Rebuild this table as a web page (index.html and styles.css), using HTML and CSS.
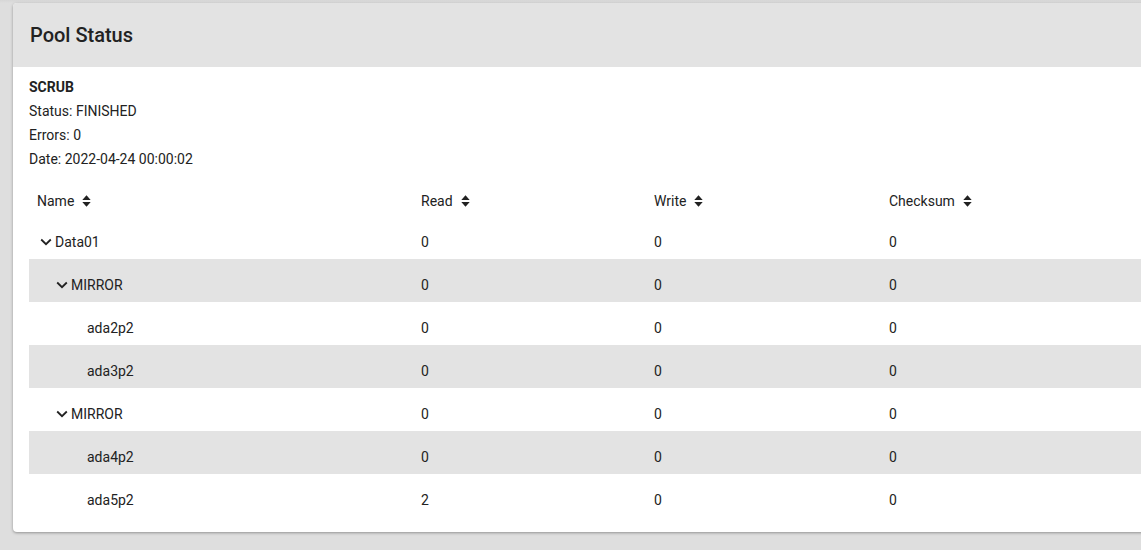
FILE: index.html
```html
<!DOCTYPE html>
<html>
<head>
<meta charset="utf-8">
<link rel="stylesheet" href="styles.css">
</head>
<body>
<div class="page">
  <div class="card">
    <div class="card-header"><h1 class="title">Pool Status</h1></div>
    <div class="card-body">
      <div class="info">
        <div class="info-line bold">SCRUB</div>
        <div class="info-line">Status: FINISHED</div>
        <div class="info-line">Errors: 0</div>
        <div class="info-line">Date: 2022-04-24 00:00:02</div>
      </div>
      <div class="table">
        <div class="row head">
          <div class="cell">Name<svg class="sort" viewBox="0 0 9 12"><path d="M4.5 0.3L8.7 4.9H0.3z M4.5 11.7L0.3 7.1H8.7z"/></svg></div>
          <div class="cell">Read<svg class="sort" viewBox="0 0 9 12"><path d="M4.5 0.3L8.7 4.9H0.3z M4.5 11.7L0.3 7.1H8.7z"/></svg></div>
          <div class="cell">Write<svg class="sort" viewBox="0 0 9 12"><path d="M4.5 0.3L8.7 4.9H0.3z M4.5 11.7L0.3 7.1H8.7z"/></svg></div>
          <div class="cell">Checksum<svg class="sort" viewBox="0 0 9 12"><path d="M4.5 0.3L8.7 4.9H0.3z M4.5 11.7L0.3 7.1H8.7z"/></svg></div>
        </div>
        <div class="row">
          <div class="cell name lvl0"><svg class="chev" viewBox="0 0 12 8"><path d="M1.2 1.5L6 6.2L10.8 1.5"/></svg>Data01</div>
          <div class="cell">0</div><div class="cell">0</div><div class="cell">0</div>
        </div>
        <div class="row alt">
          <div class="cell name lvl1"><svg class="chev" viewBox="0 0 12 8"><path d="M1.2 1.5L6 6.2L10.8 1.5"/></svg>MIRROR</div>
          <div class="cell">0</div><div class="cell">0</div><div class="cell">0</div>
        </div>
        <div class="row">
          <div class="cell name lvl2"><span class="spacer"></span>ada2p2</div>
          <div class="cell">0</div><div class="cell">0</div><div class="cell">0</div>
        </div>
        <div class="row alt">
          <div class="cell name lvl2"><span class="spacer"></span>ada3p2</div>
          <div class="cell">0</div><div class="cell">0</div><div class="cell">0</div>
        </div>
        <div class="row">
          <div class="cell name lvl1"><svg class="chev" viewBox="0 0 12 8"><path d="M1.2 1.5L6 6.2L10.8 1.5"/></svg>MIRROR</div>
          <div class="cell">0</div><div class="cell">0</div><div class="cell">0</div>
        </div>
        <div class="row alt">
          <div class="cell name lvl2"><span class="spacer"></span>ada4p2</div>
          <div class="cell">0</div><div class="cell">0</div><div class="cell">0</div>
        </div>
        <div class="row">
          <div class="cell name lvl2"><span class="spacer"></span>ada5p2</div>
          <div class="cell">2</div><div class="cell">0</div><div class="cell">0</div>
        </div>
      </div>
    </div>
  </div>
</div>
</body>
</html>
```

FILE: styles.css
```css
html, body {
  margin: 0;
  padding: 0;
  background: #dedede;
  overflow: hidden;
}
body {
  font-family: Roboto, "Liberation Sans", sans-serif;
  color: #222;
  font-size: 14px;
}
.page {
  padding: 3px 0 0 13px;
  height: 547px;
  background: linear-gradient(#d6d6d6 0, #dedede 3px);
}
.card {
  width: 1160px;
  background: #fff;
  border-radius: 4px;
  overflow: hidden;
  box-shadow: 0 1px 3px rgba(0,0,0,0.35);
}
.card-header {
  background: #e3e3e3;
  height: 64px;
  display: flex;
  align-items: center;
  padding-left: 17px;
}
.title {
  margin: 0;
  font-size: 20px;
  font-weight: 500;
  color: #222;
}
.card-body {
  padding: 8px 0 15px 16px;
}
.info-line {
  line-height: 24px;
}
.bold { font-weight: 700; }
.table {
  display: flex;
  flex-direction: column;
}
.row {
  display: grid;
  grid-template-columns: 384px 233px 235px 1fr;
  height: 43px;
  box-sizing: border-box;
  padding-top: 8px;
  align-items: center;
}
.row.head {
  height: 45px;
  padding-top: 15px;
}
.row.alt { background: #e3e3e3; }
.cell {
  padding-left: 8px;
  display: flex;
  align-items: center;
}
.sort {
  width: 9px;
  height: 12px;
  margin-left: 8px;
  fill: #222;
}
.chev {
  width: 12px;
  height: 8px;
  margin-right: 3px;
  fill: none;
  stroke: #222;
  stroke-width: 1.8;
}
.spacer {
  display: inline-block;
  width: 16px;
}
.lvl0 { padding-left: 11px; }
.lvl1 { padding-left: 27px; }
.lvl2 { padding-left: 42px; }
```
